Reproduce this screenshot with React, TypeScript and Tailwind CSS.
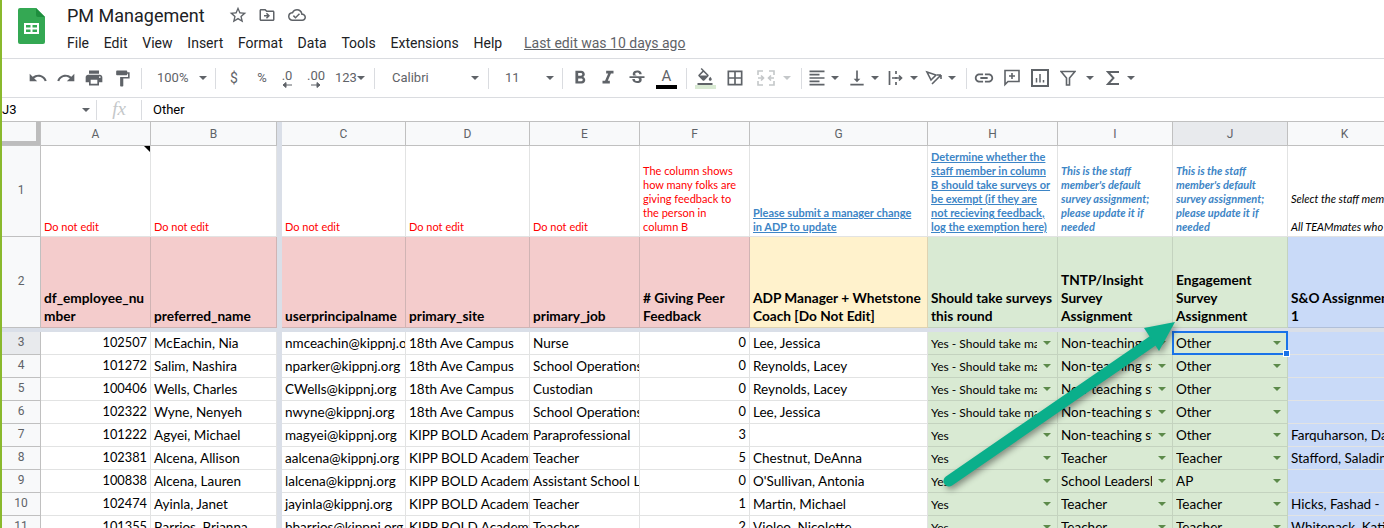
import React from 'react';
import {
  MdUndo, MdRedo, MdPrint, MdFormatPaint, MdFormatBold, MdFormatItalic, MdStrikethroughS,
  MdFormatColorFill, MdBorderAll, MdFormatAlignLeft, MdVerticalAlignBottom, MdLink,
  MdStarBorder, MdOutlineDriveFileMove, MdOutlineCloudDone,
} from 'react-icons/md';

const COLS = 'grid grid-cols-[39px_110px_126px_5px_124px_124px_110px_110px_178px_130px_115px_115px_114px]';
const GAP = 'bg-[#dadfe8]';
const MENU = ['File', 'Edit', 'View', 'Insert', 'Format', 'Data', 'Tools', 'Extensions', 'Help'];

type Row = {
  n: number; id: string; name: string; mail: string; site: string; job: string; peer: string;
  mgr: string; take: string; tntp: string; eng: string; so: string;
};

const YES_LONG = 'Yes - Should take main survey';
const NON = 'Non-teaching staff';
const KBA = 'KIPP BOLD Academy';

const ROWS: Row[] = [
  { n: 3, id: '102507', name: 'McEachin, Nia', mail: 'nmceachin@kippnj.org', site: '18th Ave Campus', job: 'Nurse', peer: '0', mgr: 'Lee, Jessica', take: YES_LONG, tntp: NON, eng: 'Other', so: '' },
  { n: 4, id: '101272', name: 'Salim, Nashira', mail: 'nparker@kippnj.org', site: '18th Ave Campus', job: 'School Operations', peer: '0', mgr: 'Reynolds, Lacey', take: YES_LONG, tntp: NON, eng: 'Other', so: '' },
  { n: 5, id: '100406', name: 'Wells, Charles', mail: 'CWells@kippnj.org', site: '18th Ave Campus', job: 'Custodian', peer: '0', mgr: 'Reynolds, Lacey', take: YES_LONG, tntp: NON, eng: 'Other', so: '' },
  { n: 6, id: '102322', name: 'Wyne, Nenyeh', mail: 'nwyne@kippnj.org', site: '18th Ave Campus', job: 'School Operations', peer: '0', mgr: 'Lee, Jessica', take: YES_LONG, tntp: NON, eng: 'Other', so: '' },
  { n: 7, id: '101222', name: 'Agyei, Michael', mail: 'magyei@kippnj.org', site: KBA, job: 'Paraprofessional', peer: '3', mgr: '', take: 'Yes', tntp: NON, eng: 'Other', so: 'Farquharson, Dana' },
  { n: 8, id: '102381', name: 'Alcena, Allison', mail: 'aalcena@kippnj.org', site: KBA, job: 'Teacher', peer: '5', mgr: 'Chestnut, DeAnna', take: 'Yes', tntp: 'Teacher', eng: 'Teacher', so: 'Stafford, Saladin' },
  { n: 9, id: '100838', name: 'Alcena, Lauren', mail: 'lalcena@kippnj.org', site: KBA, job: 'Assistant School Leader', peer: '0', mgr: "O'Sullivan, Antonia", take: 'Yes', tntp: 'School Leadership', eng: 'AP', so: '' },
  { n: 10, id: '102474', name: 'Ayinla, Janet', mail: 'jayinla@kippnj.org', site: KBA, job: 'Teacher', peer: '1', mgr: 'Martin, Michael', take: 'Yes', tntp: 'Teacher', eng: 'Teacher', so: 'Hicks, Fashad - ' },
  { n: 11, id: '101355', name: 'Barrios, Brianna', mail: 'bbarrios@kippnj.org', site: KBA, job: 'Teacher', peer: '2', mgr: 'Violeo, Nicolette', take: 'Yes', tntp: 'Teacher', eng: 'Teacher', so: 'Whitenack, Katie' },
];

const Caret = ({ className = '' }: { className?: string }) => (
  <span className={`inline-block shrink-0 w-0 h-0 border-x-[4px] border-x-transparent border-t-[4px] border-t-[#5f6368] ${className}`} />
);

const Sep = ({ className = '' }: { className?: string }) => (
  <div className={`w-px h-[21px] bg-[#dadce0] mx-[4px] shrink-0 ${className}`} />
);

const Slot = ({ w = 'w-[28px]', className = '', children }: { w?: string; className?: string; children: React.ReactNode }) => (
  <div className={`${w} ${className} h-[28px] flex items-center justify-center text-[#5f6368] shrink-0`}>{children}</div>
);

const SheetsLogo = () => (
  <svg width="27" height="36" viewBox="0 0 27 36" className="shrink-0">
    <path d="M2 0h16l9 9v25a2 2 0 0 1-2 2H2a2 2 0 0 1-2-2V2a2 2 0 0 1 2-2z" fill="#34a853" />
    <path d="M18 0l9 9h-7a2 2 0 0 1-2-2z" fill="#1e8e3e" />
    <path d="M6 15h15v11H6zm2 2v2.5h4.5V17zm6.5 0v2.5H19V17zM8 21.5V24h4.5v-2.5zm6.5 0V24H19v-2.5z" fill="#fff" fillRule="evenodd" />
  </svg>
);

const DecIcon = ({ label, right }: { label: string; right?: boolean }) => (
  <div className="flex flex-col items-center leading-none">
    <span className="text-[13px] leading-[14px]">{label}</span>
    <svg width="10" height="6" viewBox="0 0 10 6" className="-mt-px">
      {right
        ? <path d="M0 3h7M6 0.5L9 3 6 5.5z" stroke="#5f6368" fill="#5f6368" />
        : <path d="M10 3H3M4 0.5L1 3l3 2.5z" stroke="#5f6368" fill="#5f6368" />}
    </svg>
  </div>
);

const Toolbar = () => (
  <div className="h-[39px] border-b border-[#dadce0] flex items-center pl-[22px] text-[#5f6368] font-['Roboto',sans-serif]">
    <Slot><MdUndo size={20} /></Slot>
    <Slot><MdRedo size={20} /></Slot>
    <Slot><MdPrint size={20} /></Slot>
    <Slot><MdFormatPaint size={19} /></Slot>
    <Sep className="ml-[5px]" />
    <div className="w-[65px] shrink-0 flex items-center justify-between pl-[11px] pr-[4px] text-[13px]">
      <span>100%</span><Caret />
    </div>
    <Sep />
    <Slot><span className="text-[14px]">$</span></Slot>
    <Slot><span className="text-[13px]">%</span></Slot>
    <Slot w="w-[22px]"><DecIcon label=".0" /></Slot>
    <Slot w="w-[26px]" className="ml-[5px]"><DecIcon label=".00" right /></Slot>
    <div className="w-[41px] shrink-0 flex items-center text-[13px] pl-[6px]">
      <span>123</span><Caret />
    </div>
    <Sep />
    <div className="w-[105px] shrink-0 flex items-center justify-between pl-[13px] pr-[5px] text-[13px]">
      <span>Calibri</span><Caret />
    </div>
    <Sep />
    <div className="w-[65px] shrink-0 flex items-center justify-between pl-[12px] pr-[4px] text-[13px]">
      <span>11</span><Caret />
    </div>
    <Sep />
    <div className="-ml-[1px] flex">
      <Slot><MdFormatBold size={22} /></Slot>
      <Slot><MdFormatItalic size={22} /></Slot>
      <Slot w="w-[29px]"><MdStrikethroughS size={20} /></Slot>
      <Slot w="w-[31px]">
        <div className="flex flex-col items-center">
          <span className="text-[15px] leading-[15px] mt-[1px]">A</span>
          <span className="block w-[21px] h-[4px] bg-black mt-[1px]" />
        </div>
      </Slot>
    </div>
    <Sep />
    <Slot>
      <div className="flex flex-col items-center">
        <MdFormatColorFill size={18} />
        <span className="block w-[21px] h-[4px] bg-[#d9ead3] -mt-[1px]" />
      </div>
    </Slot>
    <Slot w="w-[30px]" className="ml-[1px]"><MdBorderAll size={20} /></Slot>
    <Slot className="ml-[2px]">
      <svg width="18" height="16" viewBox="0 0 18 16" fill="none" stroke="#c4c7c9" strokeWidth="1.6">
        <path d="M1 5V1h5M12 1h5v4M1 11v4h5M12 15h5v-4M1 8h5M4 5.5 6.5 8 4 10.5M17 8h-5M14 5.5 11.5 8l2.5 2.5" />
      </svg>
    </Slot>
    <Caret className="border-t-[#c4c7c9] ml-[3px]" />
    <Sep className="ml-[10px]" />
    <div className="flex items-center">
      <Slot w="w-[22px]"><MdFormatAlignLeft size={20} /></Slot>
      <Caret className="ml-[3px]" />
      <Slot className="ml-[4px]"><MdVerticalAlignBottom size={20} /></Slot>
      <Caret />
      <Slot className="ml-[3px]">
        <svg width="16" height="16" viewBox="0 0 16 16" fill="none" stroke="#5f6368" strokeWidth="1.7">
          <path d="M1.5 1v14M8 1v3M8 7v2M8 12v3M4 8h9M11 5.5 13.5 8 11 10.5" />
        </svg>
      </Slot>
      <Caret />
      <Slot className="ml-[2px]">
        <svg width="18" height="16" viewBox="0 0 18 16" fill="none" stroke="#5f6368" strokeWidth="1.6">
          <path d="M2 2l9 3-5 5zM7 14 16 5M16 5v4M16 5h-4" />
        </svg>
      </Slot>
      <Caret />
    </div>
    <Sep className="ml-[10px]" />
    <div className="flex items-center -ml-[1px]">
      <Slot><MdLink size={22} /></Slot>
      <Slot>
        <svg width="16" height="18" viewBox="0 0 16 18" fill="none" stroke="#5f6368" strokeWidth="1.6">
          <path d="M1 1.5h14v11H4l-3 3zM8 4v6M5 7h6" />
        </svg>
      </Slot>
      <Slot>
        <svg width="18" height="18" viewBox="0 0 18 18" fill="none" stroke="#5f6368" strokeWidth="2">
          <path d="M1 1h16v16H1z" />
          <path d="M5.5 9v4.5M9 5v8.5M12.5 11v2.5" strokeWidth="1.5" />
        </svg>
      </Slot>
      <Slot>
        <svg width="16" height="16" viewBox="0 0 16 16" fill="none" stroke="#5f6368" strokeWidth="1.6">
          <path d="M1 1.5h14L9.5 8v7h-3V8z" />
        </svg>
      </Slot>
      <Caret className="ml-[4px]" />
      <Slot className="ml-[5px]">
        <svg width="14" height="16" viewBox="0 0 14 16" fill="none" stroke="#5f6368" strokeWidth="1.9">
          <path d="M13 2H2l5.5 6L2 14h11" />
        </svg>
      </Slot>
      <Caret className="border-x-[3px] border-t-[3px]" />
    </div>
  </div>
);

const HeadCell = ({ children, active }: { children?: React.ReactNode; active?: boolean }) => (
  <div className={`flex items-center justify-center text-[12px] text-[#5f6368] font-['Roboto',sans-serif] border-r border-b border-[#c0c0c0] ${active ? 'bg-[#e8eaed]' : 'bg-[#f8f9fa]'}`}>
    {children}
  </div>
);

const RowNum = ({ n, active }: { n: number; active?: boolean }) => (
  <div className={`flex items-center justify-center text-[12px] text-[#5f6368] font-['Roboto',sans-serif] border-r border-b border-[#c0c0c0] ${active ? 'bg-[#e8eaed]' : 'bg-[#f8f9fa]'}`}>
    <span className="-mt-[2px]">{n}</span>
  </div>
);

const Note = ({ className = '', children }: { className?: string; children?: React.ReactNode }) => (
  <div className={`relative flex flex-col justify-end overflow-hidden px-[3px] pb-[2px] text-[11px] leading-[14px] border-r border-b border-[#e2e3e3] ${className}`}>
    {children}
  </div>
);

const Title = ({ bg, children }: { bg: string; children: React.ReactNode }) => (
  <div className={`flex flex-col justify-end overflow-hidden px-[3px] pb-[2px] text-[13.7px] leading-[18px] font-bold text-black border-r border-b ${bg}`}>
    {children}
  </div>
);

const Cell = ({ right, children, className = '' }: { right?: boolean; children?: React.ReactNode; className?: string }) => (
  <div className={`flex items-center overflow-hidden whitespace-nowrap px-[3px] border-r border-b border-[#e2e3e3] text-black ${right ? 'justify-end text-[12.8px]' : 'text-[13.5px]'} ${className}`}>
    {children}
  </div>
);

const Drop = ({ small, children, selected }: { small?: boolean; children: string; selected?: boolean }) => (
  <div className="relative flex items-center pl-[3px] pr-[6px] bg-[#d9ead3] border-r border-b border-[#c4d3bf] text-black">
    <span className={`flex-1 overflow-hidden whitespace-nowrap mr-[6px] ${small ? 'text-[12px] pt-[2px]' : 'text-[13.5px]'}`}>{children}</span>
    <span className="w-0 h-0 shrink-0 border-x-[4px] border-x-transparent border-t-[4px] border-t-[#5c8a4a]" />
    {selected && (
      <>
        <div className="absolute -left-[1px] -top-[1px] -right-[1px] -bottom-[1px] border-2 border-[#1a73e8]" />
        <div className="absolute -right-[3px] -bottom-[3px] w-[7px] h-[7px] bg-[#1a73e8] border border-white z-10" />
      </>
    )}
  </div>
);

const Arrow = () => (
  <svg
    width="260" height="190" viewBox="0 0 260 190"
    className="absolute left-[930px] top-[310px] z-20 drop-shadow-[2px_3px_3px_rgba(0,0,0,0.4)]"
  >
    <path d="M17 171L222 30" stroke="#0aaf8b" strokeWidth="11" strokeLinecap="round" fill="none" />
    <path d="M243 12L212 18L227 41z" fill="#0aaf8b" />
  </svg>
);

export default function App() {
  const red = 'text-[#ff0000]';
  const blue = 'text-[#3d85c6] font-bold';
  const pink = 'bg-[#f4cccc] border-[#d0b4b4]';
  const green = 'bg-[#d9ead3] border-[#c4d3bf]';

  return (
    <div className="relative w-[1384px] h-[528px] overflow-hidden bg-white border-l-2 border-[#8ab92d] font-['Lato',sans-serif]">
      {/* title + menus */}
      <div className="h-[59px] border-b border-[#dadce0] flex items-start pl-[16px] pt-[8px] font-['Roboto',sans-serif]">
        <SheetsLogo />
        <div className="ml-[22px] -mt-[3px]">
          <div className="flex items-center h-[18px] mt-[1px]">
            <span className="text-[18px] text-[#202124] w-[161px]">PM Management</span>
            <MdStarBorder size={20} className="text-[#5f6368]" />
            <MdOutlineDriveFileMove size={18} className="text-[#5f6368] ml-[10px]" />
            <MdOutlineCloudDone size={18} className="text-[#5f6368] ml-[12px]" />
          </div>
          <div className="flex items-center gap-[14.8px] mt-[10px] text-[14px] text-[#202124] h-[18px]">
            {MENU.map((m) => <span key={m}>{m}</span>)}
            <span className="ml-[7px] underline text-[#5f6368]">Last edit was 10 days ago</span>
          </div>
        </div>
      </div>

      <Toolbar />

      {/* formula bar */}
      <div className="h-[24px] border-b border-[#c0c0c0] flex items-center font-['Roboto',sans-serif] text-[13px] text-black">
        <div className="w-[95px] h-[20px] border-r border-[#dadce0] flex items-center justify-between pr-[6px]">
          <span>J3</span>
          <Caret className="border-x-[3px] border-t-[3px]" />
        </div>
        <span className="w-[44px] text-center font-['Liberation_Serif',serif] italic text-[19px] text-[#c4c7c9]">fx</span>
        <div className="w-px h-[20px] bg-[#dadce0]" />
        <span className="ml-[11px]">Other</span>
      </div>

      {/* column letters */}
      <div className={`${COLS} h-[24px]`}>
        <div className="relative bg-[#f8f9fa] border-r border-b border-[#c0c0c0]">
          <div className="absolute right-0 top-0 bottom-0 w-[4px] bg-[#bdbdbd]" />
          <div className="absolute left-0 right-0 bottom-0 h-[4px] bg-[#bdbdbd]" />
        </div>
        <HeadCell>A</HeadCell>
        <HeadCell>B</HeadCell>
        <div className={GAP} />
        <HeadCell>C</HeadCell>
        <HeadCell>D</HeadCell>
        <HeadCell>E</HeadCell>
        <HeadCell>F</HeadCell>
        <HeadCell>G</HeadCell>
        <HeadCell>H</HeadCell>
        <HeadCell>I</HeadCell>
        <HeadCell active>J</HeadCell>
        <HeadCell>K</HeadCell>
      </div>

      {/* row 1 notes */}
      <div className={`${COLS} h-[91px]`}>
        <RowNum n={1} />
        <Note className={red}>
          Do not edit
          <span className="absolute right-0 top-0 w-0 h-0 border-l-[6px] border-l-transparent border-t-[6px] border-t-black" />
        </Note>
        <Note className={red}>Do not edit</Note>
        <div className={GAP} />
        <Note className={red}>Do not edit</Note>
        <Note className={red}>Do not edit</Note>
        <Note className={red}>Do not edit</Note>
        <Note className={red}><span>The column shows how many folks are giving feedback to the person in<br />column B</span></Note>
        <Note className={`${blue} underline`}><span>Please submit a manager change<br />in ADP to update</span></Note>
        <Note className={`${blue} underline`}>Determine whether the staff member in column B should take surveys or be exempt (if they are not recieving feedback, log the exemption here)</Note>
        <Note className={`${blue} italic`}>This is the staff member's default survey assignment; please update it if needed</Note>
        <Note className={`${blue} italic`}>This is the staff member's default survey assignment; please update it if needed</Note>
        <Note className="italic text-black whitespace-nowrap">
          <span>Select the staff member</span>
          <span className="h-[14px]" />
          <span>All TEAMmates who</span>
        </Note>
      </div>

      {/* row 2 titles */}
      <div className={`${COLS} h-[91px]`}>
        <RowNum n={2} />
        <Title bg={pink}><span className="break-all">df_employee_number</span></Title>
        <Title bg={pink}>preferred_name</Title>
        <div className={GAP} />
        <Title bg={pink}>userprincipalname</Title>
        <Title bg={pink}>primary_site</Title>
        <Title bg={pink}>primary_job</Title>
        <Title bg={pink}># Giving Peer Feedback</Title>
        <Title bg="bg-[#fff2cc] border-[#dfd3b2]">ADP Manager + Whetstone Coach [Do Not Edit]</Title>
        <Title bg={green}>Should take surveys this round</Title>
        <Title bg={green}>TNTP/Insight Survey Assignment</Title>
        <Title bg={green}>Engagement Survey Assignment</Title>
        <Title bg="bg-[#c9daf8] border-[#b0bfd9]"><span className="whitespace-nowrap">S&amp;O Assignment</span><span>1</span></Title>
      </div>

      {/* frozen row divider */}
      <div className={`h-[4px] ${GAP}`} />

      {ROWS.map((r) => (
        <div key={r.n} className={`${COLS} h-[23px]`}>
          <RowNum n={r.n} active={r.n === 3} />
          <Cell right>{r.id}</Cell>
          <Cell>{r.name}</Cell>
          <div className={GAP} />
          <Cell>{r.mail}</Cell>
          <Cell>{r.site}</Cell>
          <Cell>{r.job}</Cell>
          <Cell right>{r.peer}</Cell>
          <Cell>{r.mgr}</Cell>
          <Drop small>{r.take}</Drop>
          <Drop>{r.tntp}</Drop>
          <Drop selected={r.n === 3}>{r.eng}</Drop>
          <Cell className="bg-[#c9daf8] border-[#b0bfd9]">{r.so}</Cell>
        </div>
      ))}

      <Arrow />
    </div>
  );
}
